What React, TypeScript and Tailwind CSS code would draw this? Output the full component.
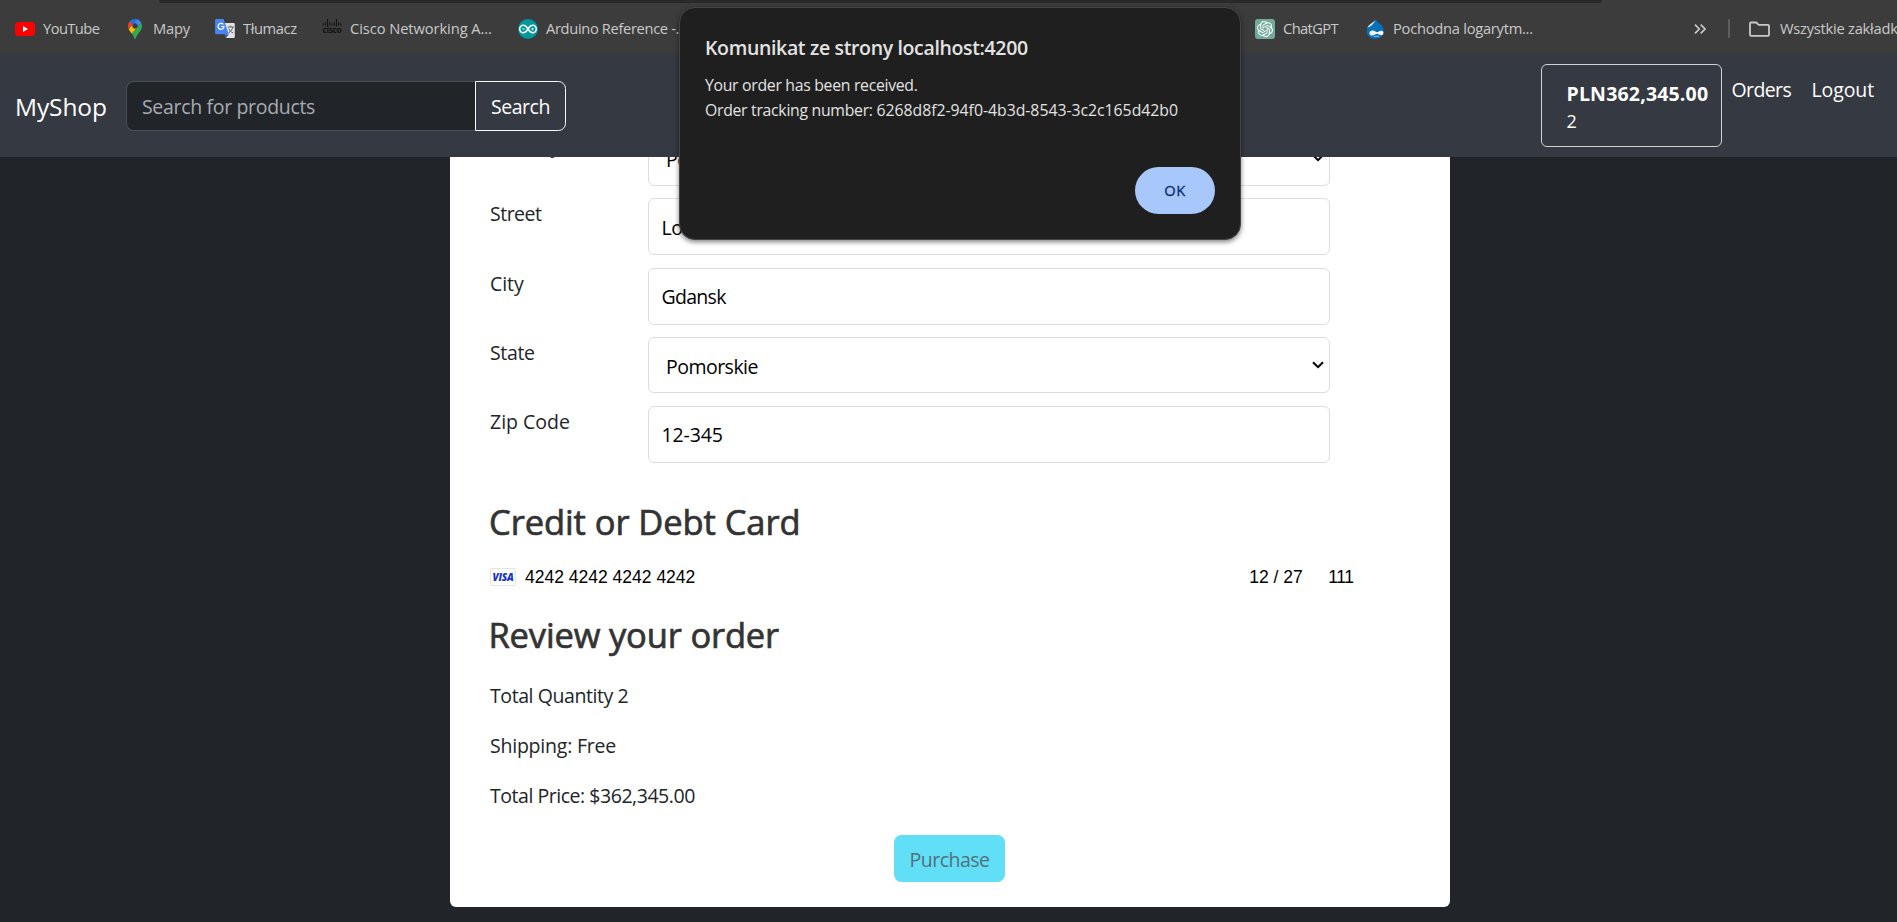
import type { ReactNode } from "react";
import { SiOpenai } from "react-icons/si";

function YouTubeIcon() {
  return (
    <svg viewBox="0 0 20 20" className="size-5">
      <rect x="0" y="3" width="20" height="14" rx="3.6" fill="#ff0000" />
      <path d="M8 7v6l5-3z" fill="#fff" />
    </svg>
  );
}

function MapsIcon() {
  return (
    <svg viewBox="0 0 92.3 132.3" className="size-5">
      <path fill="#1a73e8" d="M60.2 2.2C55.8.8 51 0 46.1 0 32 0 19.3 6.4 10.8 16.5l21.8 18.3L60.2 2.2z" />
      <path fill="#ea4335" d="M10.8 16.5C4.1 24.5 0 34.9 0 46.1c0 8.7 1.7 15.7 4.6 22l28-33.3-21.8-18.3z" />
      <path fill="#4285f4" d="M46.2 28.5c9.8 0 17.7 7.9 17.7 17.7 0 4.3-1.6 8.3-4.2 11.4 0 0 13.9-16.6 27.5-32.7-5.6-10.8-15.3-19-27-22.7L32.6 34.8c3.3-3.8 8.1-6.3 13.6-6.3" />
      <path fill="#fbbc04" d="M46.2 63.8c-9.8 0-17.7-7.9-17.7-17.7 0-4.3 1.5-8.3 4.1-11.3l-28 33.3c4.8 10.6 12.8 19.2 21 29.9l34.1-40.5c-3.3 3.9-8.1 6.3-13.5 6.3" />
      <path fill="#34a853" d="M59.1 109.2c15.4-24.1 33.3-35 33.3-63 0-7.7-1.9-14.9-5.2-21.3L25.6 98c2.6 3.4 5.3 7.3 7.9 11.3 9.4 14.5 6.8 23.1 12.8 23.1s3.4-8.7 12.8-23.2" />
    </svg>
  );
}

function TranslateIcon() {
  return (
    <svg viewBox="0 0 20 20" className="size-5">
      <path d="M8 4h10.6a1.2 1.2 0 0 1 1.2 1.2v12.6a1.2 1.2 0 0 1-1.2 1.2H11z" fill="#e3e3e3" />
      <path d="M10.2 15.2h3.6L11 19z" fill="#3350c4" />
      <path d="M12.8 8h6M15.8 6.6V8M17.8 8c-.5 2.6-2 4.500-4.300 5.800M13.800 9.600c.9 2 2.400 3.500 4.400 4.300" stroke="#5f6368" strokeWidth="1" fill="none" />
      <path d="M1.400 0h7.200l5.200 15.200H1.400A1.300 1.300 0 0 1 .1 13.900V1.300A1.300 1.300 0 0 1 1.400 0z" fill="#4a86f0" />
      <path d="M8.300 5.400A3 3 0 1 0 9 7.500H6.200" stroke="#fff" strokeWidth="1.200" fill="none" />
    </svg>
  );
}

function CiscoIcon() {
  return (
    <span className="flex h-5 w-5 flex-col items-center text-[#141414]">
      <svg viewBox="0 0 20 8" className="h-2 w-5 shrink-0" stroke="#141414" strokeWidth="1.100" fill="none">
        <path d="M1 4.500v2M3.300 3v3.500M5.500 0v7.500M7.800 3v3.500M10 4.500v2M12.200 3v3.500M14.500 0v7.500M16.700 3v3.500M19 4.500v2" />
      </svg>
      <span className="-mt-px text-[8.5px] leading-[8px] font-bold tracking-[-0.4px]">cisco</span>
    </span>
  );
}

function ArduinoIcon() {
  return (
    <svg viewBox="0 0 20 20" className="size-5">
      <circle cx="10" cy="10" r="10" fill="#00979d" />
      <path
        d="M10 10C8.500 7.600 7.200 6.300 5.400 6.300a3.700 3.700 0 0 0 0 7.400C7.200 13.700 8.500 12.400 10 10s2.800-3.700 4.600-3.700a3.700 3.700 0 0 1 0 7.400C12.800 13.700 11.500 12.400 10 10z"
        fill="none"
        stroke="#fff"
        strokeWidth="1.500"
      />
      <path d="M4.200 10h2.400M13.400 10h2.400M14.600 8.800v2.400" stroke="#fff" strokeWidth=".9" />
    </svg>
  );
}

function DrupalIcon() {
  return (
    <svg viewBox="0 0 20 20" className="size-5">
      <path d="M10.600.3c.6 1.900 2.700 3.100 4.600 4.800 2.300 2 3.600 4.300 3.600 7A8.300 8.300 0 0 1 10.300 20C5.600 20 1.700 16.600 1.700 12c0-3.500 2-5.600 4.500-7.400C8.200 3.200 10.100 2.200 10.600.3z" fill="#0671b8" />
      <path d="M10.600.3c-.5 1.900-2.400 2.900-4.400 4.300C4.600 5.800 3.200 7 2.400 8.700 5 8 9 5.500 10.600.3z" fill="#d9ecf7" />
      <path d="M7.700 11.600c2 0 3 1.700 4.200 1.700 1.300 0 2.700-1.500 4.500-1.500 1.300 0 2 .9 2 2.300 0 1.500-.9 2.200-2.200 2.200-1.600 0-2.900-1.500-4.100-1.500-1.400 0-2.800 1.700-4.900 1.700-1.600 0-2.700-.9-2.700-2.300 0-1.700 1.400-2.600 3.200-2.600z" fill="#fff" />
      <path d="M9 17.800c2-.9 3.800-.9 5.200-.1" stroke="#9fd0ee" strokeWidth="1" fill="none" />
    </svg>
  );
}

function Bookmark({ icon, className, children }: { icon: ReactNode; className: string; children: string }) {
  return (
    <div className={`flex shrink-0 items-center gap-2 whitespace-nowrap ${className}`}>
      {icon}
      <span className="pb-0.5">{children}</span>
    </div>
  );
}

function BookmarksBar() {
  return (
    <div className="flex h-[54px] flex-col bg-[#3c3c3c]">
      <div className="mr-[295px] ml-[159px] h-[3px] shrink-0 rounded-b-[5px] bg-[#292929]" />
      <div className="flex flex-1 items-center overflow-hidden pl-[15px] text-[14.7px] leading-5 text-[#c9c9c9]">
        <Bookmark icon={<YouTubeIcon />} className="w-[110px] tracking-[-0.57px]">YouTube</Bookmark>
        <Bookmark icon={<MapsIcon />} className="w-[90px] tracking-[-0.2px]">Mapy</Bookmark>
        <Bookmark icon={<TranslateIcon />} className="w-[107px] tracking-[-0.4px]">Tłumacz</Bookmark>
        <Bookmark icon={<CiscoIcon />} className="w-[196px] tracking-[-0.08px]">Cisco Networking A...</Bookmark>
        <Bookmark icon={<ArduinoIcon />} className="w-[737px] tracking-[-0.35px]">Arduino Reference -...</Bookmark>
        <Bookmark
          icon={
            <span className="flex size-5 items-center justify-center rounded-[3px] bg-[#74aa9c]">
              <SiOpenai className="size-4 text-white" />
            </span>
          }
          className="w-[110px] tracking-[-0.6px]"
        >
          ChatGPT
        </Bookmark>
        <Bookmark icon={<DrupalIcon />} className="w-[329px] tracking-[-0.26px]">Pochodna logarytm...</Bookmark>
        <svg viewBox="0 0 12 10" className="h-[10px] w-3 shrink-0" fill="none" stroke="#c9c9c9" strokeWidth="1.700">
          <path d="M1 .7 5.300 5 1 9.300M6.700.7 11 5 6.700 9.300" />
        </svg>
        <div className="ml-[21.500px] h-[19px] w-[2.500px] shrink-0 rounded-full bg-[#5e5e5e]" />
        <svg viewBox="0 0 21 16" className="ml-[19px] h-4 w-[21px] shrink-0" fill="none" stroke="#c9c9c9" strokeWidth="1.800" strokeLinejoin="round">
          <path d="M2 1.500h5.300l2.400 2.300H19a1 1 0 0 1 1 1v9a1 1 0 0 1-1 1H2a1 1 0 0 1-1-1V2.500a1 1 0 0 1 1-1z" />
        </svg>
        <span className="ml-[10px] shrink-0 pb-0.5 tracking-[-0.25px] whitespace-nowrap">Wszystkie zakładki</span>
      </div>
    </div>
  );
}

function Navbar() {
  return (
    <nav className="flex h-[103px] bg-[#353941] text-[19.5px] leading-[30px] text-white">
      <div className="mt-[27px] flex h-[50px] items-center">
        <span className="w-[126px] pt-[2px] pl-[15px] text-[24.5px] tracking-[-0.1px]">MyShop</span>
        <div className="flex h-full w-[349px] items-center rounded-l-[7.500px] border border-r-0 border-[#495057] bg-[#212529] pt-[2px] pl-[15px] tracking-[-0.33px] text-[#a7acb1]">
          Search for products
        </div>
        <button className="h-full w-[91px] rounded-r-[7.500px] border border-[#f8f9fa] pt-[2px] pl-[15px] text-left tracking-[-0.46px]">
          Search
        </button>
      </div>
      <div className="mt-[10px] ml-auto h-[83px] w-[181px] rounded-[6px] border border-[#d0d2d4] pt-[13.500px] pl-[24.500px]">
        <div className="font-bold tracking-[0.18px]">PLN362,345.00</div>
        <div className="text-[18px] leading-6">2</div>
      </div>
      <span className="mt-[21px] ml-[9.500px] w-[80px] tracking-[-0.6px]">Orders</span>
      <span className="mt-[21px] mr-[21.500px] w-[64px] tracking-[-0.1px]">Logout</span>
    </nav>
  );
}

function Field({ label, select, className, valueClass, children }: { label: string; select?: boolean; className: string; valueClass: string; children: string }) {
  return (
    <div className={`flex ${className}`}>
      <span className="w-[158px] shrink-0 pt-px leading-[30px]">{label}</span>
      <div
        className={`flex w-[682px] items-center justify-between rounded-[6px] border border-[#dddddd] text-black ${select ? "pt-[3px] pr-[5px] pl-[17px]" : "pl-[12.500px]"}`}
      >
        <span className={valueClass}>{children}</span>
        {select && (
          <svg viewBox="0 0 12 8" className="-mt-[3px] h-2 w-3" fill="none" stroke="#000" strokeWidth="2">
            <path d="M1 1.200 6 6.200l5-5" />
          </svg>
        )}
      </div>
    </div>
  );
}

function CheckoutCard() {
  return (
    <main className="ml-[450px] flex h-[750px] w-[1000px] flex-col overflow-hidden rounded-b-[6px] bg-white pl-[40px] text-[19.5px] leading-[30px] text-[#212529]">
      <div className="-mt-[27px] flex shrink-0 flex-col">
        <Field label="Country" select className="mb-[12px] h-[56px] tracking-[-0.4px]" valueClass="tracking-[-0.52px]">Poland</Field>
        <Field label="Street" className="mb-[13px] h-[57px] tracking-[-0.5px]" valueClass="tracking-[-0.5px] pt-[2px]">Lokalna 12</Field>
        <Field label="City" className="mb-[12px] h-[57px] tracking-[-0.05px]" valueClass="tracking-[-0.7px]">Gdansk</Field>
        <Field label="State" select className="mb-[13px] h-[56px] tracking-[-0.36px]" valueClass="tracking-[-0.52px]">Pomorskie</Field>
        <Field label="Zip Code" className="h-[57px] tracking-[0px]" valueClass="tracking-[-0.1px]">12-345</Field>
      </div>
      <h2 className="mt-[38px] -ml-px text-[34.5px] leading-[42px] font-medium tracking-[-0.08px] text-[#333] [-webkit-text-stroke:0.7px_#333]">Credit or Debt Card</h2>
      <div className="mt-[22px] flex h-6 items-center font-['Liberation_Sans',Arial,sans-serif] text-[17.5px] text-black">
        <span className="flex h-[18px] w-[26px] items-center justify-center rounded-[2px] border border-[#e4e4e4] font-['Open_Sans',sans-serif] text-[10px] leading-none font-extrabold tracking-[-0.2px] text-[#1434cb] italic">
          VISA
        </span>
        <span className="ml-[9px]">4242 4242 4242 4242</span>
        <span className="ml-auto">12 / 27</span>
        <span className="mr-[96.500px] ml-[25.500px] tracking-[-0.43px]">111</span>
      </div>
      <h2 className="mt-[25px] -ml-[1.500px] text-[34.5px] leading-[42px] font-medium tracking-[-0.17px] text-[#333] [-webkit-text-stroke:0.7px_#333]">Review your order</h2>
      <p className="mt-[25px] tracking-[-0.42px]">Total Quantity 2</p>
      <p className="mt-5 tracking-[-0.22px]">Shipping: Free</p>
      <p className="mt-5 tracking-[-0.46px]">Total Price: $362,345.00</p>
      <button className="mt-[24px] ml-[404px] h-[47px] w-[111px] rounded-[7.500px] bg-[#61dff7] pt-[2px] pl-[15.500px] text-left tracking-[-0.51px] text-[#52707a]">
        Purchase
      </button>
    </main>
  );
}

function AlertDialog() {
  return (
    <div
      role="alertdialog"
      className="absolute top-[7px] left-[679px] flex h-[233px] w-[562px] flex-col rounded-[16px] border border-[#444444] bg-[#1f1f1f] px-[25px] text-[#e3e3e3] shadow-[0_2px_5px_rgba(0,0,0,0.5)]"
    >
      <h1 className="mt-[25px] text-[19.5px] leading-[30px] font-semibold tracking-[-0.35px]">Komunikat ze strony localhost:4200</h1>
      <p className="mt-[10px] text-[15.8px] leading-[25px] tracking-[-0.3px]">Your order has been received.</p>
      <p className="text-[15.8px] leading-[25px] tracking-[-0.29px]">
        Order tracking number: <span className="tracking-[-0.02px]">6268d8f2-94f0-4b3d-8543-3c2c165d42b0</span>
      </p>
      <button className="mt-auto mb-[25px] h-[47px] w-[80px] self-end rounded-full bg-[#a8c7fa] text-[14.7px] font-medium tracking-[0.5px] text-[#062e6f] [-webkit-text-stroke:0.3px_#062e6f]">
        OK
      </button>
    </div>
  );
}

export default function App() {
  return (
    <div className="relative h-[922px] w-full overflow-hidden bg-[#212529] font-['Open_Sans','Noto_Sans',sans-serif]">
      <BookmarksBar />
      <Navbar />
      <CheckoutCard />
      <AlertDialog />
    </div>
  );
}
